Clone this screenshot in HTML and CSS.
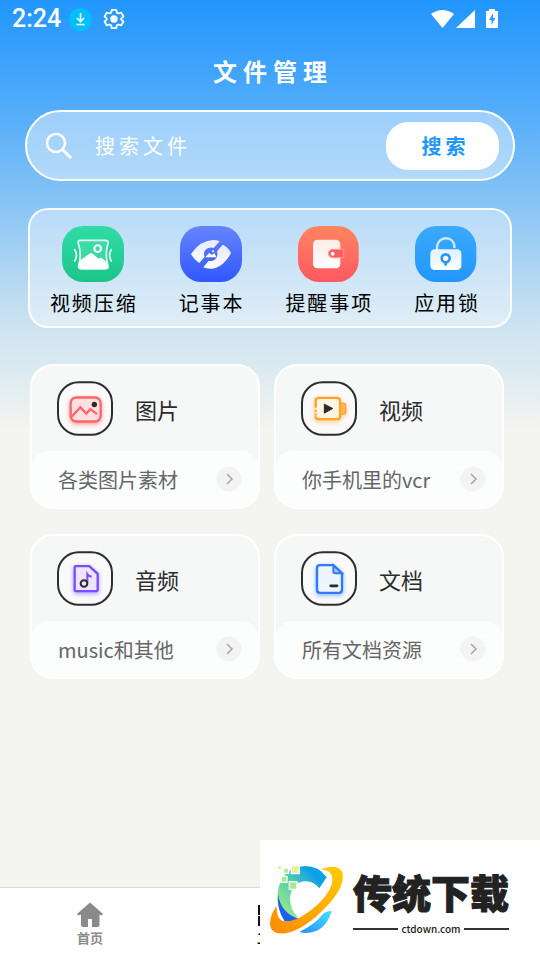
FILE: index.html
```
<!DOCTYPE html>
<html lang="zh-CN">
<head>
    <meta charset="UTF-8">
    <meta name="viewport" content="width=device-width, initial-scale=1.0">
    <title>文件管理</title>
    <link rel="stylesheet" href="styles.css">
</head>
<body>
    <div class="status-bar">
        <span class="clock">2:24</span>
        <svg class="download-badge" width="23" height="23" viewBox="0 0 23 23">
            <circle cx="11.5" cy="11.5" r="11.5" fill="#00bfff"/>
            <path d="M11.5 5v8M8 10l3.500 3.500L15 10M7.500 16.500h8" fill="none" stroke="#fff" stroke-width="1.600"/>
        </svg>
        <svg class="gear" width="22" height="22" viewBox="0 0 24 24">
            <path d="M9.500 2h5l.6 3 1.800 1 2.900-1 2.500 4.300-2.300 2v1.400l2.300 2-2.500 4.300-2.900-1-1.800 1-.6 3h-5l-.6-3-1.800-1-2.900 1-2.500-4.300 2.300-2v-1.400l-2.300-2L4.200 5l2.900 1 1.800-1z" fill="none" stroke="#fff" stroke-width="2" stroke-linejoin="round"/>
            <circle cx="12" cy="12" r="4" fill="#fff"/>
        </svg>
        <svg class="signals" width="68" height="20" viewBox="0 0 68 20">
            <path d="M0 5Q11.500-3 23 5L11.500 19z" fill="#fff"/>
            <path d="M44 1v18H25z" fill="#fff"/>
            <path d="M55 2h3V0h6v2h3v17H55z" fill="#fff"/>
            <path d="M62 4l-4 7h2.500v5l4-7H62z" fill="#2f9bfa"/>
        </svg>
    </div>

    <main class="content">
        <h1>文件管理</h1>

        <form class="search">
            <svg width="28" height="28" viewBox="0 0 28 28">
                <circle cx="11" cy="11" r="9" fill="none" stroke="#fff" stroke-width="2.500"/>
                <path d="M17.500 17.500L26 26" stroke="#fff" stroke-width="3"/>
            </svg>
            <input type="text" placeholder="搜索文件" aria-label="搜索文件">
            <button type="button">搜索</button>
        </form>

        <div class="tools">
            <button class="tool" type="button">
                <svg width="62" height="56" viewBox="0 0 186 168">
                    <defs>
                        <linearGradient id="green" x1="0" y1="0" x2="0" y2="1"><stop offset="0" stop-color="#2fdda5"/><stop offset="1" stop-color="#1cc489"/></linearGradient>
                        <linearGradient id="paper" x1="0" y1="0" x2="0" y2="1"><stop offset="0" stop-color="#ffffff" stop-opacity=".85"/><stop offset="1" stop-color="#ffffff"/></linearGradient>
                    </defs>
                    <rect width="186" height="168" rx="64" fill="url(#green)"/>
                    <path d="M56 43H130Q140 43 138 52Q128 86 138 120Q140 129 128 129H60Q48 129 50 120Q60 86 49 52Q46 43 56 43z" fill="#5be6b8" fill-opacity=".4" stroke="#e8fff6" stroke-width="5"/>
                    <circle cx="107" cy="68" r="10" fill="none" stroke="#fff" stroke-width="6"/>
                    <path d="M51 106L80 85Q88 78 96 86L109 98Q116 93 122 98L136 110Q140 129 128 129H60Q48 129 51 106z" fill="#fff"/>
                    <path d="M37 69Q50 88 37 107M149 69Q136 88 149 107" fill="none" stroke="#e8fff6" stroke-width="5"/>
                </svg>
                <span>视频压缩</span>
            </button>
            <button class="tool" type="button">
                <svg width="62" height="56" viewBox="0 0 186 168">
                    <defs><linearGradient id="indigo" x1="0" y1="0" x2="0" y2="1"><stop offset="0" stop-color="#6685ff"/><stop offset="1" stop-color="#3157ff"/></linearGradient></defs>
                    <rect width="186" height="168" rx="64" fill="url(#indigo)"/>
                    <path d="M33 84Q62 42 100 42Q112 42 119 46L101 66Q88 62 78 70Q68 80 74 92L58 111Q40 98 33 84z" fill="url(#paper)"/>
                    <path d="M128 56Q146 64 153 82Q126 128 92 128Q78 128 70 124L86 104Q98 108 107 99Q115 90 111 76z" fill="url(#paper)"/>
                    <path d="M76 94L88 80l7 7 8-5 7 12z" fill="#fff"/>
                    <circle cx="99" cy="76" r="3" fill="#fff"/>
                </svg>
                <span>记事本</span>
            </button>
            <button class="tool" type="button">
                <svg width="62" height="56" viewBox="0 0 186 168">
                    <defs><linearGradient id="red" x1="0" y1="0" x2="0" y2="1"><stop offset="0" stop-color="#ff8460"/><stop offset="1" stop-color="#ff5860"/></linearGradient></defs>
                    <rect width="182" height="168" x="3" rx="64" fill="url(#red)"/>
                    <rect x="48" y="41" width="82" height="86" rx="13" fill="url(#paper)"/>
                    <path d="M107 70h33v25h-33a12 12 0 0 1 0-25z" fill="#ff5c60" stroke="#ff9a97" stroke-width="3"/>
                    <circle cx="107" cy="83" r="6" fill="#fff"/>
                </svg>
                <span>提醒事项</span>
            </button>
            <button class="tool" type="button">
                <svg width="62" height="56" viewBox="0 0 186 168">
                    <defs><linearGradient id="blue" x1="0" y1="0" x2="0" y2="1"><stop offset="0" stop-color="#3ba9ff"/><stop offset="1" stop-color="#2196fb"/></linearGradient></defs>
                    <rect width="184" height="168" rx="64" fill="url(#blue)"/>
                    <path d="M66 72C62 26 122 26 118 66" fill="none" stroke="#c9e6ff" stroke-width="7"/>
                    <rect x="46" y="70" width="93" height="62" rx="13" fill="url(#paper)"/>
                    <circle cx="92" cy="97" r="12" fill="none" stroke="#2b96ee" stroke-width="8"/>
                    <path d="M92 108v11" stroke="#2b96ee" stroke-width="8"/>
                </svg>
                <span>应用锁</span>
            </button>
        </div>

        <div class="cards">
            <a class="card" href="#">
                <div class="card-head">
                    <svg class="glow-red" width="56" height="55" viewBox="0 0 168 164">
                        <rect class="frame" x="3" y="3" width="162" height="158" rx="62"/>
                        <g class="glyph">
                            <rect x="41" y="49" width="90" height="72" rx="17" fill="#ffe0e1" stroke="#ff666b" stroke-width="7"/>
                            <path d="M44 107L70 78l18 19 12-13 20 15" fill="none" stroke="#ff666b" stroke-width="7"/>
                        </g>
                        <circle cx="112" cy="70" r="8" fill="#2b2b2b"/>
                    </svg>
                    <h2>图片</h2>
                </div>
                <div class="card-foot">
                    <span>各类图片素材</span>
                    <svg width="26" height="26" viewBox="0 0 26 26"><circle cx="13" cy="13" r="12.500" fill="#f3f3f4"/><path d="M11 8l5 5-5 5" fill="none" stroke="#a6a6a6" stroke-width="1.500"/></svg>
                </div>
            </a>
            <a class="card" href="#">
                <div class="card-head">
                    <svg class="glow-orange" width="56" height="55" viewBox="0 0 168 164">
                        <rect class="frame" x="3" y="3" width="162" height="158" rx="62"/>
                        <g class="glyph">
                            <path d="M44 80V59Q44 50 53 50H108Q117 50 117 59V105Q117 114 108 114H53Q44 114 44 105" fill="#fff3e2" stroke="#ffa22b" stroke-width="7"/>
                            <path d="M44 86v6M44 97v6" stroke="#ffa22b" stroke-width="7"/>
                            <path d="M119 66h8q7 0 7 7v19q0 7-7 7h-8z" fill="#ffb95c" stroke="#ffa22b" stroke-width="4"/>
                        </g>
                        <path d="M70 69l25 13-25 14z" fill="#2b2b2b" stroke="#2b2b2b" stroke-width="3" stroke-linejoin="round"/>
                    </svg>
                    <h2>视频</h2>
                </div>
                <div class="card-foot">
                    <span>你手机里的vcr</span>
                    <svg width="26" height="26" viewBox="0 0 26 26"><circle cx="13" cy="13" r="12.500" fill="#f3f3f4"/><path d="M11 8l5 5-5 5" fill="none" stroke="#a6a6a6" stroke-width="1.500"/></svg>
                </div>
            </a>
            <a class="card" href="#">
                <div class="card-head">
                    <svg class="glow-purple" width="56" height="55" viewBox="0 0 168 164">
                        <rect class="frame" x="3" y="3" width="162" height="158" rx="62"/>
                        <g class="glyph">
                            <path d="M56 45H97L122 68V115Q122 120 117 120H58Q53 120 53 115V48Q53 45 56 45z" fill="#ebe5ff" stroke="#7b4dff" stroke-width="7"/>
                            <path d="M91 96V69Q95 75 104 77" fill="none" stroke="#7b4dff" stroke-width="6"/>
                        </g>
                        <circle cx="81" cy="97" r="10" fill="none" stroke="#2b2b2b" stroke-width="6"/>
                    </svg>
                    <h2>音频</h2>
                </div>
                <div class="card-foot">
                    <span>music和其他</span>
                    <svg width="26" height="26" viewBox="0 0 26 26"><circle cx="13" cy="13" r="12.500" fill="#f3f3f4"/><path d="M11 8l5 5-5 5" fill="none" stroke="#a6a6a6" stroke-width="1.500"/></svg>
                </div>
            </a>
            <a class="card" href="#">
                <div class="card-head">
                    <svg class="glow-blue" width="56" height="55" viewBox="0 0 168 164">
                        <rect class="frame" x="3" y="3" width="162" height="158" rx="62"/>
                        <g class="glyph">
                            <path d="M57 42H97L123 66V116Q123 125 114 125H57Q48 125 48 116V51Q48 42 57 42z" fill="#eef5ff" stroke="#2d7bff" stroke-width="7"/>
                            <path d="M97 42V60Q97 66 103 66H123z" fill="#a9cbff" stroke="#2d7bff" stroke-width="6"/>
                        </g>
                        <path d="M89 104h19" stroke="#2b2b2b" stroke-width="8" stroke-linecap="round"/>
                    </svg>
                    <h2>文档</h2>
                </div>
                <div class="card-foot">
                    <span>所有文档资源</span>
                    <svg width="26" height="26" viewBox="0 0 26 26"><circle cx="13" cy="13" r="12.500" fill="#f3f3f4"/><path d="M11 8l5 5-5 5" fill="none" stroke="#a6a6a6" stroke-width="1.500"/></svg>
                </div>
            </a>
        </div>
    </main>

    <nav class="tab-bar">
        <a class="tab" href="#">
            <svg width="26" height="26" viewBox="0 0 26 26">
                <path d="M13 .5L26 12l-1 1.500-2.500-1V23q0 2-2 2H15v-8h-4v8H6q-2 0-2-2V12.500L1 13.500 0 12z" fill="#8a8a8a"/>
            </svg>
            <span>首页</span>
        </a>
        <a class="tab active" href="#">
            <svg width="24" height="26" viewBox="0 0 24 26">
                <path d="M1 4h9v8H1zM14 4h9v8h-9zM1 15h9v8H1zM14 15h9v8h-9z" fill="none" stroke="#111" stroke-width="2"/>
            </svg>
            <span>工具</span>
        </a>
        <a class="tab" href="#" aria-label="我的"></a>
    </nav>

    <div class="watermark">
        <svg width="76" height="72" viewBox="0 0 228 216">
            <defs>
                <linearGradient id="ring" x1="0" y1="1" x2="1" y2="0"><stop offset="0" stop-color="#ff8a00"/><stop offset="1" stop-color="#ffcc00"/></linearGradient>
                <linearGradient id="arc" x1="0" y1="1" x2="1" y2="0"><stop offset=".2" stop-color="#8ee68a"/><stop offset=".5" stop-color="#4ccbb4"/><stop offset=".8" stop-color="#0d9fe8"/></linearGradient>
                <linearGradient id="tail" x1="0" y1="1" x2="1" y2="0"><stop offset="0" stop-color="#2b8cf5"/><stop offset="1" stop-color="#3fe3ff"/></linearGradient>
            </defs>
            <path d="M173 40L151 73Q132 50 108 52Q66 56 63 104Q64 140 86 158Q60 170 46 172Q22 130 26 88Q34 10 108 6Q150 6 173 40z" fill="url(#arc)"/>
            <path d="M27 90Q36 150 92 165Q70 174 48 173Q22 135 27 90z" fill="#1f5ff0"/>
            <path d="M188 141Q170 205 112 207Q98 207 92 203Q140 180 162 150Q170 142 188 141z" fill="url(#tail)"/>
            <path d="M155 16Q212-4 221 28Q228 70 170 130Q110 195 50 208Q4 214 3 178Q4 150 23 126Q22 164 40 170Q80 182 150 118Q200 66 188 34Q182 18 155 16z" fill="url(#ring)"/>
            <g stroke="#fff" stroke-width="4">
                <path d="M25 4h13v13H25z" fill="#e4f29a"/>
                <path d="M43 12h16v16H43z" fill="#b5eb96"/>
                <path d="M67 5h24v24H67z" fill="#e4f29a"/>
                <path d="M36 37h18v18H36z" fill="#a9e88f"/>
                <path d="M61 53h23v23H61z" fill="#a9e88f"/>
            </g>
        </svg>
        <div class="watermark-text">
            <strong>传统下载</strong>
            <span class="domain">ctdown.com</span>
        </div>
    </div>
</body>
</html>
```
FILE: styles.css
```
* {
    box-sizing: border-box;
}
body {
    margin: 0;
    min-height: 100vh;
    display: flex;
    flex-direction: column;
    position: relative;
    font-family: "Noto Sans CJK SC", sans-serif;
    background: linear-gradient(#2196fd 0, #4eaafa 100px, #86c3f5 200px, #d0e4f0 330px, #dceaf1 370px, #f4f4f0 430px);
}
svg {
    display: block;
    flex-shrink: 0;
}
button {
    border: none;
    font-family: inherit;
    cursor: pointer;
}
a {
    text-decoration: none;
}

.status-bar {
    display: flex;
    align-items: center;
    height: 38px;
    padding: 0 41px 0 12px;
    color: #fff;
}
.clock {
    font: 500 25px/38px Roboto, sans-serif;
}
.download-badge {
    margin-left: 8px;
}
.gear {
    margin-left: 11px;
}
.signals {
    margin-left: auto;
}

.content {
    flex: 1;
    padding-bottom: 30px;
}
h1 {
    margin: 15px 0 21px;
    padding-left: 6px;
    color: #fff;
    font-size: 24px;
    line-height: 36px;
    letter-spacing: 6px;
    text-align: center;
}

.search {
    display: flex;
    align-items: center;
    height: 71px;
    margin: 0 25px;
    padding: 0 14px 0 18px;
    border: 2px solid #fff;
    border-radius: 36px;
    background: rgba(255, 255, 255, 0.42);
}
.search input {
    flex: 1;
    min-width: 0;
    padding: 0;
    margin-left: 22px;
    border: none;
    outline: none;
    background: none;
    color: #fff;
    font-family: inherit;
    font-size: 20px;
    letter-spacing: 4px;
}
.search input::placeholder {
    color: #fff;
}
.search button {
    width: 113px;
    height: 48px;
    padding: 0 0 0 6px;
    border-radius: 22px;
    background: #fff;
    color: #2196fa;
    font-size: 20px;
    font-weight: 700;
    letter-spacing: 4px;
}

.tools {
    display: grid;
    grid-template-columns: repeat(4, 1fr);
    margin: 27px 28px 0;
    padding: 16px 5px 9px 4px;
    border: 2px solid rgba(255, 255, 255, 0.9);
    border-radius: 20px;
    background: rgba(255, 255, 255, 0.38);
}
.tool {
    display: flex;
    flex-direction: column;
    align-items: center;
    gap: 7px;
    padding: 0;
    background: none;
    color: #000;
    font-size: 20px;
    line-height: 28px;
    letter-spacing: 2px;
    white-space: nowrap;
}
.tool span {
    padding-left: 2px;
}

.cards {
    display: grid;
    grid-template-columns: 1fr 1fr;
    gap: 25px 14px;
    margin: 36px 36px 0 30px;
}
.card {
    border: 2px solid #fff;
    border-radius: 23px;
    background: #f6f7f7;
    overflow: hidden;
}
.card-head {
    display: flex;
    align-items: center;
    gap: 22px;
    height: 85px;
    padding: 0 25px;
}
.card h2 {
    margin: 0;
    color: #2b2b2b;
    font-size: 22px;
    font-weight: 400;
    line-height: 32px;
}
.card-foot {
    display: flex;
    align-items: center;
    justify-content: space-between;
    height: 56px;
    padding: 0 16px 0 26px;
    border-radius: 16px 16px 0 0;
    background: #fcfdfd;
    color: #666;
    font-size: 20px;
    white-space: nowrap;
}
.frame {
    fill: #fafafa;
    stroke: #2e2e2e;
    stroke-width: 6px;
}
.glow-red .glyph {
    filter: drop-shadow(0 5px 6px #ff9a9d);
}
.glow-orange .glyph {
    filter: drop-shadow(0 5px 6px #ffcb85);
}
.glow-purple .glyph {
    filter: drop-shadow(0 5px 6px #b49cff);
}
.glow-blue .glyph {
    filter: drop-shadow(0 5px 6px #8ebaff);
}

.tab-bar {
    display: flex;
    height: 73px;
    border-top: 1px solid #d9d9d9;
    background: #fff;
}
.tab {
    flex: 1;
    display: flex;
    flex-direction: column;
    align-items: center;
    padding-top: 14px;
    color: #8a8a8a;
    font-size: 13px;
    font-weight: 700;
    line-height: 20px;
}
.tab.active {
    color: #111;
}

/* sits over the corner of the page */
.watermark {
    position: absolute;
    right: 0;
    bottom: 0;
    display: flex;
    align-items: center;
    gap: 8px;
    width: 280px;
    height: 120px;
    padding-left: 9px;
    background: #fff;
    color: #222;
}
.watermark-text {
    width: 156px;
}
.watermark strong {
    display: block;
    font-size: 39px;
    font-weight: 900;
    line-height: 56px;
    white-space: nowrap;
    -webkit-text-stroke: 1px #222;
}
.domain {
    display: flex;
    align-items: center;
    gap: 3px;
    margin-top: 2px;
    font-size: 10px;
    font-weight: 500;
    line-height: 16px;
}
.domain::before,
.domain::after {
    content: "";
    flex: 1;
    height: 2px;
    background: #333;
}
```
